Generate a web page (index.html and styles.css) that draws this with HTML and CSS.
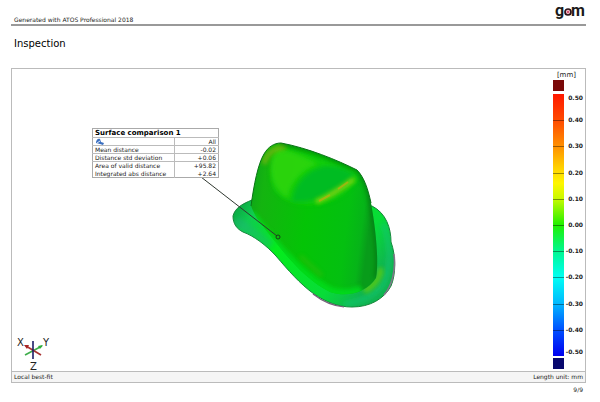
FILE: index.html
```html
<!DOCTYPE html>
<html lang="en">
<head>
  <meta charset="UTF-8">
  <meta name="viewport" content="width=device-width, initial-scale=1.0">
  <title>Inspection</title>
  <link rel="stylesheet" href="styles.css">
</head>
<body>
  <header class="report-header">
    <span class="generated">Generated with ATOS Professional 2018</span>
    <svg class="logo" width="32" height="22" viewBox="0 0 32 22" role="img" aria-label="gom">
      <text class="logo-text" x="1" y="14">g</text>
      <circle cx="14" cy="10" r="3" fill="#f3b9c6" stroke="#2b1418" stroke-width="1.7"/>
      <circle cx="14" cy="10" r="1" fill="#c8375a"/>
      <text class="logo-text" x="17" y="14">m</text>
    </svg>
  </header>

  <h1>Inspection</h1>

  <main class="report">
    <div class="view">
      <div class="stage">
        <svg class="scene" width="400" height="302" viewBox="12 69 400 302">
          <defs>
            <linearGradient id="crown" x1="0" y1="0" x2="1" y2="0.15">
              <stop offset="0" stop-color="#0ca01c"/>
              <stop offset="0.14" stop-color="#14b410"/>
              <stop offset="0.5" stop-color="#04c406"/>
              <stop offset="0.82" stop-color="#04c010"/>
              <stop offset="0.94" stop-color="#06b418"/>
              <stop offset="1" stop-color="#089c1a"/>
            </linearGradient>
            <linearGradient id="brim" x1="0" y1="0" x2="1" y2="0.5">
              <stop offset="0" stop-color="#0a9a40"/>
              <stop offset="0.15" stop-color="#10cc50"/>
              <stop offset="0.4" stop-color="#04ec1c"/>
              <stop offset="0.8" stop-color="#08dc38"/>
              <stop offset="1" stop-color="#10b450"/>
            </linearGradient>
            <filter id="soft" x="-30%" y="-30%" width="160%" height="160%">
              <feGaussianBlur stdDeviation="2"/>
            </filter>
            <clipPath id="brimClip">
              <path d="M252 200 C242 204 235 208 233 216 C233 224 237 229 243 232 C254 236 266 245 276 256 C288 270 300 284 314 294 C326 302 338 307 352 307 C370 307 384 299 391 286 C396 274 396 256 391 242 C391 228 386 213 372 206Z"/>
            </clipPath>
            <clipPath id="crownClip">
              <path d="M281 143 C274 143 268 147 264 154 C258 164 254 184 251 206 C256 220 268 232 278 245 C292 263 310 282 330 292 C348 298 367 292 376 278 C379 262 376 230 371 203 C368 189 364 177 357 170 C337 160 308 148 281 143Z"/>
            </clipPath>
          </defs>

          <!-- brim -->
          <path d="M252 200 C242 204 235 208 233 216 C233 224 237 229 243 232 C254 236 266 245 276 256 C288 270 300 284 314 294 C326 302 338 307 352 307 C370 307 384 299 391 286 C396 274 396 256 391 242 C391 228 386 213 372 206Z" fill="url(#brim)" stroke="#168438" stroke-width="1"/>
          <g clip-path="url(#brimClip)">
            <path d="M236 220 C244 228 256 232 270 246" fill="none" stroke="#20b080" stroke-width="9" opacity="0.4" filter="url(#soft)"/>
            <path d="M383 224 C390 242 392 264 383 284 C374 296 362 302 344 304" fill="none" stroke="#12c874" stroke-width="5" opacity="0.6" filter="url(#soft)"/>
            <path d="M380 268 C382 276 374 286 364 291" fill="none" stroke="#60cc10" stroke-width="6" opacity="0.8" filter="url(#soft)"/>
          </g>
          <path d="M394 254 C396 270 392 286 384 295" fill="none" stroke="#9a6b98" stroke-width="1.6" opacity="0.8"/>
          <path d="M313 294 C322 301 334 306 344 307" fill="none" stroke="#76607a" stroke-width="1.2"/>

          <!-- crown -->
          <path d="M281 143 C274 143 268 147 264 154 C258 164 254 184 251 206 C256 220 268 232 278 245 C292 263 310 282 330 292 C348 298 367 292 376 278 C379 262 376 230 371 203 C368 189 364 177 357 170 C337 160 308 148 281 143Z" fill="url(#crown)"/>
          <g clip-path="url(#crownClip)">
            <path d="M250 214 C268 238 300 276 330 292 C342 296 354 294 362 290" fill="none" stroke="#06e01c" stroke-width="10" opacity="0.8" filter="url(#soft)"/>
            <path d="M300 256 L322 276" stroke="#58b808" stroke-width="5" opacity="0.3" filter="url(#soft)"/>
            <path d="M281 147 C272 158 268 178 274 190 C282 202 300 206 318 204 C338 202 354 188 360 175 C338 164 308 152 281 147Z" fill="#16d00c" opacity="0.7" filter="url(#soft)"/>
            <path d="M272 156 C268 174 274 190 288 198 C290 182 302 170 318 164 C304 156 288 150 276 148Z" fill="#34d808" opacity="0.7" filter="url(#soft)"/>
            <path d="M292 202 C294 184 306 170 326 166 C340 166 350 170 354 176 C346 188 326 202 292 202Z" fill="#06bc22" filter="url(#soft)"/>
            <path d="M264 164 C266 154 274 147 286 147" fill="none" stroke="#80b40a" stroke-width="5" opacity="0.8" filter="url(#soft)"/>
            <path d="M316 202 C330 196 342 188 354 179" fill="none" stroke="#88d40c" stroke-width="5" opacity="0.9" filter="url(#soft)"/>
            <path d="M319 201 L330 195 M338 189 L348 182" stroke="#e2a010" stroke-width="2" opacity="0.5"/>
            <path d="M281 143 C308 148 337 160 357 170 C364 177 368 189 371 203 C376 230 379 262 376 278" fill="none" stroke="#065c10" stroke-width="4" opacity="0.5" filter="url(#soft)"/>
          </g>
          <path d="M251 206 C254 184 258 164 264 154 C268 147 274 143 281 143 C308 148 337 160 357 170 C364 177 368 189 371 203" fill="none" stroke="#0a7416" stroke-width="1"/>

          <!-- leader to the measured point -->
          <path d="M201 177 L277 236" stroke="#303830" stroke-width="1"/>
          <circle cx="278" cy="237" r="2" fill="none" stroke="#164018" stroke-width="1"/>
        </svg>

        <table class="callout">
          <thead>
            <tr><th colspan="2">Surface comparison 1</th></tr>
          </thead>
          <tbody>
            <tr class="ruled">
              <td>
                <svg width="10" height="7" viewBox="0 0 10 7" aria-hidden="true">
                  <path d="M1 5 C1 2 3 0 5 1 L6 4 L9 5 L8 7 L5 6Z" fill="#3a6fc0"/>
                  <path d="M2 5 L5 3" stroke="#dce8fa" stroke-width="1"/>
                </svg>
              </td>
              <td>All</td>
            </tr>
            <tr class="ruled"><td>Mean distance</td><td>-0.02</td></tr>
            <tr class="ruled"><td>Distance std deviation</td><td>+0.06</td></tr>
            <tr><td>Area of valid distance</td><td>+95.82</td></tr>
            <tr><td>Integrated abs distance</td><td>+2.64</td></tr>
          </tbody>
        </table>

        <svg class="axes" width="38" height="40" viewBox="0 0 38 40" role="img" aria-label="Axes X, Y, Z">
          <path d="M9 24 L26 15" stroke="#3fae4c" stroke-width="1.6"/>
          <path d="M10 15 L25 24" stroke="#a83232" stroke-width="1.6"/>
          <path d="M17 10 V28" stroke="#1c1c66" stroke-width="1.6"/>
          <path d="M8 14 L13 14 L11 18Z" fill="#a82424"/>
          <path d="M27 14 L22 15 L24 18Z" fill="#2fae3c"/>
          <text x="1" y="15">X</text>
          <text x="27" y="15">Y</text>
          <text x="14" y="39">Z</text>
        </svg>
      </div>

      <aside class="legend">
        <div class="unit">[mm]</div>
        <div class="scale">
          <div class="bar">
            <div class="over"></div>
            <div class="ramp">
              <i></i><i></i><i></i><i></i><i></i><i></i><i></i><i></i><i></i><i></i>
            </div>
            <div class="under"></div>
          </div>
          <ul class="values">
            <li>0.50</li>
            <li>0.40</li>
            <li>0.30</li>
            <li>0.20</li>
            <li>0.10</li>
            <li>0.00</li>
            <li>-0.10</li>
            <li>-0.20</li>
            <li>-0.30</li>
            <li>-0.40</li>
            <li>-0.50</li>
          </ul>
        </div>
      </aside>
    </div>

    <div class="status">
      <span>Local best-fit</span>
      <span>Length unit: mm</span>
    </div>
  </main>

  <footer class="page-number">9/9</footer>
</body>
</html>
```
FILE: styles.css
```css
* {
  box-sizing: border-box;
}

body {
  margin: 0;
  padding: 2px 14px 0 11px;
  background: #fff;
  color: #222;
  font-family: "DejaVu Sans", sans-serif;
  font-size: 6px;
  line-height: 8px;
}

.report-header {
  display: flex;
  justify-content: space-between;
  align-items: flex-end;
  height: 24px;
  padding-left: 3px;
  border-bottom: 2px solid #999;
}

.logo {
  overflow: visible;
}

.logo-text {
  font-family: Roboto, sans-serif;
  font-size: 16px;
  font-weight: 700;
  fill: #1a1a1a;
}

h1 {
  margin: 12px 0 18px;
  padding-left: 3px;
  font-size: 10px;
  font-weight: 400;
  line-height: 12px;
  color: #000;
}

.report {
  border: 1px solid #bbb;
}

.view {
  display: flex;
  height: 302px;
}

.stage {
  position: relative;
  flex: 1;
}

.scene {
  display: block;
}

.callout {
  position: absolute;
  top: 59px;
  left: 80px;
  width: 127px;
  border: 1px solid #aaa;
  border-collapse: collapse;
  background: #fff;
  color: #222;
}

.callout th {
  height: 9px;
  padding: 0 2px;
  border-bottom: 1px solid #bbb;
  text-align: left;
  font-size: 7px;
  color: #000;
}

.callout td {
  height: 8px;
  padding: 0 2px;
  line-height: 7px;
}

.callout td:last-child {
  width: 44px;
  border-left: 1px solid #bbb;
  text-align: right;
}

.callout .ruled td {
  border-bottom: 1px solid #bbb;
}

.callout svg {
  display: block;
}

.axes {
  position: absolute;
  left: 4px;
  bottom: 0;
}

.axes text {
  font-size: 10px;
  fill: #222;
}

.legend {
  width: 46px;
  padding: 2px 2px 0 0;
}

.unit {
  padding-right: 7px;
  text-align: right;
  font-size: 7px;
}

.scale {
  display: flex;
  justify-content: space-between;
  padding-top: 1px;
}

.bar {
  width: 11px;
  margin-left: 14px;
}

.over,
.under {
  height: 11px;
  background: #7a0808;
}

.under {
  background: #08086e;
}

.ramp {
  display: grid;
  grid-template-rows: repeat(10, 1fr);
  height: 262px;
  margin: 3px 0 2px;
  background: linear-gradient(#ff1800, #ff4a00 10%, #ff9000 20%, #ffd000 28%, #fff600 34%, #c8fa00 40%, #20f000 50%, #00f890 60%, #00fff4 70%, #00b8ff 80%, #0050ff 90%, #0000f0);
}

.ramp i + i {
  border-top: 1px solid rgba(0, 0, 0, 0.4);
}

/* end labels stay inside the ramp, the others centre on their tick */
.values {
  display: grid;
  grid-template-rows: 1fr repeat(9, 2fr) 1fr;
  align-items: center;
  height: 262px;
  margin: 14px 0 0 -4px;
  padding: 0;
  list-style: none;
  text-align: right;
  font-weight: 700;
}

.values li:first-child {
  align-self: start;
}

.values li:last-child {
  align-self: end;
}

.status {
  display: flex;
  justify-content: space-between;
  align-items: center;
  height: 11px;
  padding: 0 2px;
  border-top: 1px solid #bbb;
  background: #f5f5f5;
}

.page-number {
  padding: 3px 3px 0 0;
  text-align: right;
}
```
